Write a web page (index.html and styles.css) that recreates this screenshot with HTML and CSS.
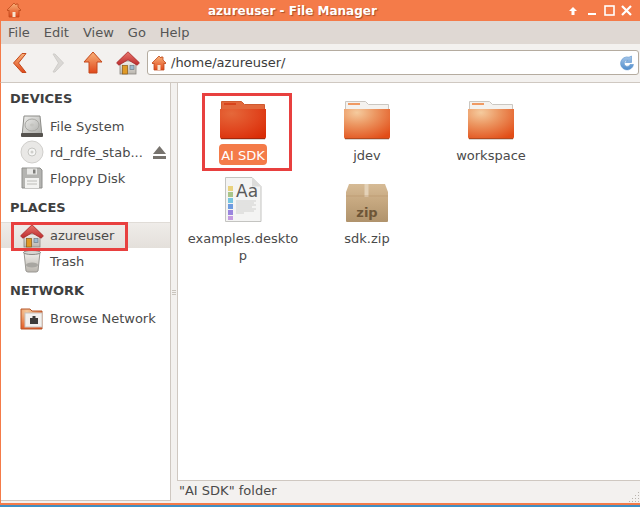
FILE: index.html
```html
<!DOCTYPE html>
<html lang="en">
<head>
<meta charset="utf-8">
<title>azureuser - File Manager</title>
<link rel="stylesheet" href="styles.css">
</head>
<body>
<svg class="defs" width="0" height="0" aria-hidden="true">
  <defs>
    <radialGradient id="gFolderO" cx="0.28" cy="0.12" r="1">
      <stop offset="0" stop-color="#f5cb9e"/><stop offset="0.4" stop-color="#ec9762"/><stop offset="1" stop-color="#e24d17"/>
    </radialGradient>
    <radialGradient id="gFolderR" cx="0.25" cy="0.15" r="1">
      <stop offset="0" stop-color="#e5683a"/><stop offset="0.6" stop-color="#e0441d"/><stop offset="1" stop-color="#d92c06"/>
    </radialGradient>
    <linearGradient id="gOrange" x1="0" y1="0" x2="0" y2="1">
      <stop offset="0" stop-color="#f8b27a"/><stop offset="1" stop-color="#e0481a"/>
    </linearGradient>
    <linearGradient id="gRoof" x1="0" y1="0" x2="0" y2="1">
      <stop offset="0" stop-color="#e9766c"/><stop offset="1" stop-color="#bc2c2e"/>
    </linearGradient>
    <linearGradient id="gWall" x1="0" y1="0" x2="0" y2="1">
      <stop offset="0" stop-color="#f2f0ec"/><stop offset="1" stop-color="#b9b5ae"/>
    </linearGradient>
    <linearGradient id="gBox" x1="0" y1="0" x2="0" y2="1">
      <stop offset="0" stop-color="#d6bb96"/><stop offset="0.45" stop-color="#c6a880"/><stop offset="1" stop-color="#b0936c"/>
    </linearGradient>
    <linearGradient id="gDisk" x1="0" y1="0" x2="1" y2="1">
      <stop offset="0" stop-color="#f0f0ee"/><stop offset="1" stop-color="#a9a9a5"/>
    </linearGradient>
    <linearGradient id="gBlue" x1="0" y1="0" x2="0" y2="1">
      <stop offset="0" stop-color="#a9c8ea"/><stop offset="1" stop-color="#4f8ccb"/>
    </linearGradient>
    <symbol id="folderOrange" viewBox="0 0 48 48">
      <path d="M2.500 9.500h20l3 3h20v9h-43z" fill="#f4f2ef" stroke="#cbc7c1"/>
      <rect x="5" y="11" width="12" height="2" fill="#f09a63"/>
      <path d="M1 17h46v28a2 2 0 0 1-2 2H3a2 2 0 0 1-2-2z" fill="url(#gFolderO)"/>
      <path d="M2 46h44v1H2z" fill="#b34a20"/>
      <path d="M2 47.500h44" stroke="#d9d6d2"/>
    </symbol>
    <symbol id="folderRed" viewBox="0 0 48 48">
      <path d="M2.500 9.500h20l3 3h20v9h-43z" fill="#e2683c" stroke="#cf5a30"/>
      <rect x="5" y="11" width="12" height="2" fill="#d8441c"/>
      <path d="M1 17h46v28a2 2 0 0 1-2 2H3a2 2 0 0 1-2-2z" fill="url(#gFolderR)"/>
      <path d="M2 46h44v1H2z" fill="#a3280d"/>
      <path d="M2 47.500h44" stroke="#d9d6d2"/>
    </symbol>
    <symbol id="home" viewBox="0 0 24 24">
      <rect x="4" y="10" width="16" height="13" fill="url(#gWall)" stroke="#8b8782" stroke-width=".8"/>
      <rect x="6.500" y="14.500" width="5" height="8.500" fill="#e09a26" stroke="#8b5a14" stroke-width=".7"/>
      <rect x="14" y="14.500" width="4" height="4" fill="#9dbad0" stroke="#6f7d88" stroke-width=".7"/>
      <path d="M12 .8L.6 11.800l2.200 2.400L12 8.800l9.200 5.400 2.200-2.400z" fill="url(#gRoof)" stroke="#a5282a" stroke-width=".8"/>
    </symbol>
    <symbol id="homeOrange" viewBox="0 0 16 16">
      <path d="M8 1L1 8l1 1 1-1v7h10V8l1 1 1-1-3-3V2h-2v1z" fill="url(#gOrange)" stroke="#bf4a1c" stroke-width=".8"/>
      <rect x="6.500" y="10" width="3" height="5" fill="#f7e5cf"/>
    </symbol>
  </defs>
</svg>

<div class="window">
  <header class="titlebar">
    <svg class="title-icon" width="16" height="16"><use href="#homeOrange"/></svg>
    <span class="title-text">azureuser - File Manager</span>
    <div class="win-controls">
      <svg class="wc wc-up" width="10" height="10" viewBox="0 0 10 10"><path d="M5 1L1 5h2.500v4h3V5H9z" fill="#fff"/></svg>
      <svg class="wc wc-min" width="8" height="10" viewBox="0 0 8 10"><rect y="7" width="8" height="2" fill="#fff"/></svg>
      <svg class="wc wc-max" width="11" height="11" viewBox="0 0 11 11"><rect x="1" y="1" width="9" height="9" fill="none" stroke="#fff" stroke-width="1.600"/></svg>
      <svg class="wc wc-close" width="11" height="11" viewBox="0 0 11 11"><path d="M1 1l9 9M10 1l-9 9" stroke="#fff" stroke-width="2.200"/></svg>
    </div>
  </header>

  <nav class="menubar">
    <span class="menu">File</span><span class="menu">Edit</span><span class="menu">View</span><span class="menu">Go</span><span class="menu">Help</span>
  </nav>

  <div class="toolbar">
    <svg class="tb tb-back" width="15" height="22" viewBox="0 0 15 22"><path d="M10 1.500L1.500 11l8.500 9.500h4L6.500 11 14 1.500z" fill="url(#gOrange)" stroke="#c4491c"/></svg>
    <svg class="tb tb-fwd" width="13" height="22" viewBox="0 0 13 22"><path d="M3 2l8.500 9L3 20H1l5.500-9L1 2z" fill="#dad8d5" stroke="#cfcdca"/></svg>
    <svg class="tb tb-up" width="20" height="23" viewBox="0 0 20 23"><path d="M10 1L1 11h5v11h8V11h5z" fill="url(#gOrange)" stroke="#c4491c"/></svg>
    <svg class="tb tb-home" width="24" height="24"><use href="#home"/></svg>
    <div class="address">
      <svg width="16" height="16"><use href="#homeOrange"/></svg>
      <span class="path">/home/azureuser/</span>
      <svg class="reload" width="16" height="16" viewBox="0 0 16 16"><path d="M14.500 9.500A6.500 6.500 0 1 1 10 2.200L12.500 1v6.500H6.500l2.200-2.100a3 3 0 1 0 2.300 4.100z" fill="url(#gBlue)" stroke="#5b93cf" stroke-width=".6"/></svg>
    </div>
  </div>

  <div class="main">
    <aside class="sidebar">
      <div class="head head-first">DEVICES</div>
      <div class="row">
        <svg class="ri" width="24" height="24" viewBox="0 0 24 24"><path d="M4 2h16l2 20H2z" fill="url(#gDisk)" stroke="#8c8c88"/><ellipse cx="12" cy="11" rx="7" ry="6" fill="none" stroke="#a8a8a4"/><ellipse cx="12" cy="11" rx="2" ry="1.500" fill="#c4c4c0"/><rect x="1" y="19" width="22" height="4" rx="1" fill="#55524e"/></svg>
        <span class="rl">File System</span>
      </div>
      <div class="row">
        <svg class="ri" width="24" height="24" viewBox="0 0 24 24"><circle cx="12" cy="12" r="11" fill="#e9e8e6" stroke="#d0cfcc"/><circle cx="12" cy="12" r="4" fill="#f6f6f5" stroke="#c6c6c2"/><circle cx="12" cy="12" r="1.500" fill="#cfcfcb"/></svg>
        <span class="rl">rd_rdfe_stab...</span>
        <svg class="eject" width="15" height="15" viewBox="0 0 15 15"><path d="M7.500 1L14 9H1z" fill="#77736e"/><rect x="1" y="11" width="13" height="3" fill="#77736e"/></svg>
      </div>
      <div class="row">
        <svg class="ri" width="24" height="24" viewBox="0 0 24 24"><path d="M2 2h18l2 2v18H2z" fill="#b4b4b1" stroke="#8f8f8c"/><rect x="7" y="2.500" width="10" height="6" fill="#e8e8e6"/><rect x="13" y="3.500" width="2.500" height="4" fill="#7e7e7b"/><rect x="5" y="12" width="14" height="10" fill="#f3f3f1"/><path d="M7 15h10M7 18h10" stroke="#bcbcb8"/></svg>
        <span class="rl">Floppy Disk</span>
      </div>
      <div class="head">PLACES</div>
      <div class="row row-selected">
        <svg class="ri" width="24" height="24"><use href="#home"/></svg>
        <span class="rl">azureuser</span>
      </div>
      <div class="row">
        <svg class="ri" width="24" height="24" viewBox="0 0 24 24"><path d="M4 3h16l-2 19a3 3 0 0 1-2 1H8a3 3 0 0 1-2-1z" fill="url(#gWall)" stroke="#9a9893"/><ellipse cx="12" cy="3.500" rx="8.500" ry="2" fill="#d8d6d2" stroke="#8c8a85"/><ellipse cx="12" cy="16" rx="6" ry="2.500" fill="#a8a6a1"/></svg>
        <span class="rl">Trash</span>
      </div>
      <div class="head">NETWORK</div>
      <div class="row">
        <svg class="ri" width="24" height="24" viewBox="0 0 24 24"><path d="M1 3h9l2 2h10v18H1z" fill="url(#gFolderO)" stroke="#b4562a"/><rect x="5" y="7" width="17" height="14" fill="#f2f0ee" stroke="#c8c4bf"/><rect x="10" y="12" width="8" height="6" fill="#3d3b39"/><rect x="12.500" y="10" width="3" height="3" fill="#3d3b39"/></svg>
        <span class="rl">Browse Network</span>
      </div>
    </aside>

    <div class="divider"><i></i><i></i><i></i></div>

    <div class="right">
      <section class="icons">
        <div class="item">
          <svg class="big" width="48" height="48"><use href="#folderRed"/></svg>
          <span class="label label-selected">AI SDK</span>
        </div>
        <div class="item">
          <svg class="big" width="48" height="48"><use href="#folderOrange"/></svg>
          <span class="label">jdev</span>
        </div>
        <div class="item">
          <svg class="big" width="48" height="48"><use href="#folderOrange"/></svg>
          <span class="label">workspace</span>
        </div>
        <div class="item">
          <svg class="big" width="48" height="48" viewBox="0 0 48 48">
            <path d="M6.500 2.500H33l9 9v35H6.500z" fill="#f4f4f3" stroke="#c4c4c1"/>
            <path d="M33 2.500l9 9h-9z" fill="#dcdcda"/>
            <rect x="9" y="11" width="5" height="5" fill="#e9d27e"/>
            <rect x="9" y="17" width="5" height="5" fill="#a9c589"/>
            <rect x="9" y="23" width="5" height="5" fill="#78c5e0"/>
            <rect x="9" y="29" width="5" height="5" fill="#6e9be0"/>
            <rect x="9" y="35" width="5" height="5" fill="#9a85de"/>
            <rect x="9" y="41" width="5" height="4" fill="#c49be0"/>
            <text class="aa" x="17" y="22">Aa</text>
            <path d="M17 26h20M17 28h18M17 30h20M17 32h16M17 34h20M17 36h18M17 38h8" stroke="#d0d0ce"/>
          </svg>
          <span class="label">examples.desktop</span>
        </div>
        <div class="item">
          <svg class="big" width="48" height="48" viewBox="0 0 48 48">
            <path d="M6 9h36l3 8v29a1 1 0 0 1-1 1H4a1 1 0 0 1-1-1V17z" fill="url(#gBox)"/>
            <rect x="21.500" y="9" width="4" height="13" fill="#e4d2b8"/>
            <path d="M3 21h42" stroke="#b8966c" stroke-width=".6"/>
            <text class="zip" x="24" y="42">zip</text>
          </svg>
          <span class="label">sdk.zip</span>
        </div>
      </section>
      <footer class="status">
        <span>"AI SDK" folder</span>
        <svg class="grip" width="12" height="12" viewBox="0 0 12 12"><path d="M10 1h1v1h-1zM7 4h1v1H7zM10 4h1v1h-1zM4 7h1v1H4zM7 7h1v1H7zM10 7h1v1h-1zM1 10h1v1H1zM4 10h1v1H4zM7 10h1v1H7zM10 10h1v1h-1z" fill="#b8b3ac"/></svg>
      </footer>
    </div>
  </div>
  <div class="bottom-line"></div>

  <div class="mark mark-sdk"></div>
  <div class="mark mark-home"></div>
</div>
</body>
</html>
```

FILE: styles.css
```css
* { box-sizing: border-box; }
html, body { margin: 0; padding: 0; }
body {
  width: 640px;
  height: 507px;
  overflow: hidden;
  font-family: "DejaVu Sans", sans-serif;
  font-size: 13px;
  color: #3c3c3c;
  background: #f3f1ef;
}
.defs { position: absolute; }
.window {
  position: relative;
  width: 640px;
  height: 507px;
  display: flex;
  flex-direction: column;
}
.titlebar {
  height: 21px;
  flex: none;
  background: #f47b49;
  display: flex;
  align-items: center;
  position: relative;
  padding-left: 6px;
}
.title-icon { flex: none; margin-top: -1px; }
.title-text {
  position: absolute;
  left: 208px;
  top: 3px;
  line-height: 16px;
  font-weight: bold;
  font-size: 12px;
  color: #fff;
  text-shadow: 1px 1px 1px rgba(120, 50, 20, .6);
  white-space: nowrap;
}
.win-controls { margin-left: auto; display: flex; align-items: center; height: 21px; padding-right: 8px; }
.wc { flex: none; display: block; }
.wc-min { margin-left: 10px; }
.wc-max { margin-left: 8px; }
.wc-close { margin-left: 6px; }

.menubar {
  height: 23px;
  flex: none;
  background: #dfd8d3;
  border-left: 1px solid #f47b49;
  display: flex;
  align-items: center;
  padding-left: 7px;
  gap: 14px;
  color: #555;
  line-height: 22px;
}

.toolbar {
  height: 39px;
  flex: none;
  border-left: 1px solid #f47b49;
  border-bottom: 1px solid #cfc8c1;
  padding-bottom: 1px;
  display: flex;
  align-items: center;
  background: #f3f1ef;
}
.tb { flex: none; display: block; }
.tb-back { margin-left: 11px; }
.tb-fwd { margin-left: 25px; }
.tb-up { margin-left: 18px; }
.tb-home { margin-left: 13px; }
.address {
  margin-left: 7px;
  width: 492px;
  height: 25px;
  flex: none;
  background: #fff;
  border: 1px solid #b5aca0;
  border-radius: 3px;
  display: flex;
  align-items: center;
  padding: 0 3px;
  font-size: 13px;
  color: #3c3c3c;
}
.path { margin-left: 4px; }
.reload { margin-left: auto; }

.main {
  flex: 1;
  min-height: 0;
  display: flex;
  border-left: 1px solid #f47b49;
}
.sidebar {
  width: 170px;
  flex: none;
  height: 418px;
  background: #fff;
  border-right: 1px solid #cfc8c1;
  border-bottom: 1px solid #cfc8c1;
  padding-top: 1px;
  color: #444;
}
.head {
  height: 29px;
  margin-top: 2px;
  padding-left: 9px;
  font-weight: bold;
  font-size: 13px;
  line-height: 29px;
  color: #3f3f3f;
}
.head-first { margin-top: 0; }
.row {
  height: 26px;
  display: flex;
  align-items: center;
  padding-left: 19px;
  color: #4a4a4a;
}
.row-selected { background: linear-gradient(#efece9, #e4e0db); border-top: 1px solid #e0dcd7; }
.ri { flex: none; display: block; }
.rl { margin-left: 6px; white-space: nowrap; }
.eject { flex: none; margin-left: 9px; }

.divider {
  width: 6px;
  flex: none;
  display: flex;
  flex-direction: column;
  align-items: center;
  justify-content: center;
  gap: 1px;
  height: 418px;
}
.divider i { display: block; width: 4px; height: 1px; background: #c9c4bd; }

.right { flex: 1; min-width: 0; display: flex; flex-direction: column; height: 420px; }
.icons {
  height: 398px;
  flex: none;
  background: #fff;
  border-left: 1px solid #cfc8c1;
  border-bottom: 1px solid #cfc8c1;
  padding: 9px 0 0 3px;
  display: grid;
  grid-template-columns: repeat(3, 124px);
  grid-auto-rows: 83px;
  align-content: start;
}
.item { display: flex; flex-direction: column; align-items: center; }
.big { flex: none; display: block; }
.label {
  margin-top: 7px;
  width: 114px;
  text-align: center;
  word-break: break-all;
  line-height: 17px;
  color: #4a4a4a;
}
.label-selected {
  width: auto;
  margin-top: 4px;
  padding: 3px 2px 1px;
  background: #f47b49;
  color: #fff;
  border-radius: 4px;
}
.status {
  flex: 1;
  display: flex;
  align-items: center;
  padding-left: 2px;
  padding-bottom: 4px;
  color: #4a4a4a;
  position: relative;
}
.grip { position: absolute; right: 0; bottom: 0; }
.bottom-line { height: 4px; flex: none; border-top: 2px solid #f47b49; background: #3f8fc4; }

.mark { position: absolute; border: 3px solid #e8403f; pointer-events: none; }
.mark-sdk { left: 202px; top: 93px; width: 90px; height: 78px; }
.mark-home { left: 11px; top: 222px; width: 117px; height: 29px; }

.aa { font-family: "DejaVu Sans", sans-serif; font-size: 17px; fill: #5a5a5a; }
.zip { font-family: "DejaVu Sans", sans-serif; font-size: 13px; font-weight: bold; fill: #6e5637; text-anchor: middle; }
```
